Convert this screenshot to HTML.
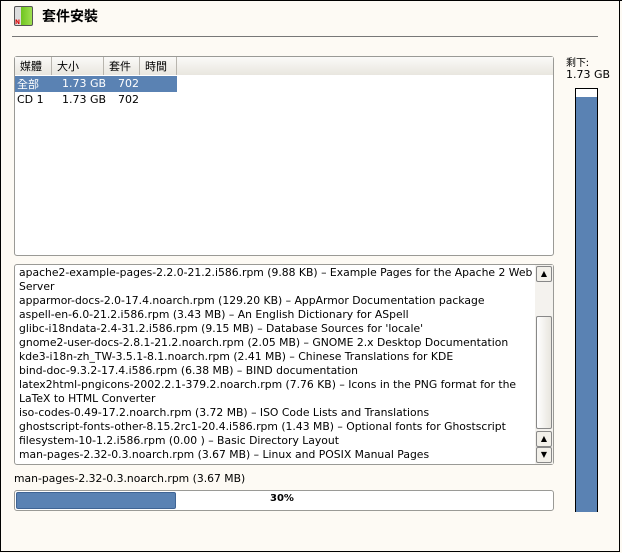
<!DOCTYPE html>
<html><head><meta charset="utf-8"><style>
*{margin:0;padding:0;box-sizing:border-box}
body{width:622px;height:553px;background:#fdfaf4;font-family:"DejaVu Sans","Liberation Sans","Noto Sans CJK TC",sans-serif;font-size:11px;color:#000;position:relative;overflow:hidden}
.a{position:absolute}
#frame{left:0;top:0;width:620px;height:552px;border:1px solid #000;border-top:none;border-right:1px solid #000}
.cjk{font-family:"Noto Sans CJK TC","WenQuanYi Zen Hei",sans-serif}
.box{border:1px solid #9a9a96;border-radius:3px;background:#fff}
.log div{height:14px;line-height:14px;white-space:nowrap;font-size:10.8px}
.hd{top:1px;height:18px;line-height:18px;border-right:1px solid #b8b5ae;padding-left:5px;background:linear-gradient(#fbfaf8,#e9e6df)}
</style></head><body>
<div class="a" id="frame"></div>
<div class="a" style="left:0;top:0;width:622px;height:1px;background:#000"></div>
<div class="a" style="left:14px;top:6px;width:19px;height:20px;background:linear-gradient(90deg,#ddd 0,#ddd 6px,#6fc420 6px,#9fe050);border:1px solid #555;border-radius:2px"></div>
<div class="a" style="left:15px;top:19px;font-size:6px;color:#d00;font-weight:bold">N</div>
<div class="a cjk" style="left:42px;top:6px;font-size:14px;font-weight:bold">套件安裝</div>
<div class="a" style="left:12px;top:36px;width:586px;height:1px;background:#777"></div>

<div class="a box" style="left:14px;top:56px;width:540px;height:200px"></div>
<div class="a hd cjk" style="left:15px;top:57px;width:37px">媒體</div>
<div class="a hd cjk" style="left:52px;top:57px;width:52px">大小</div>
<div class="a hd cjk" style="left:104px;top:57px;width:36px">套件</div>
<div class="a hd cjk" style="left:140px;top:57px;width:37px">時間</div>
<div class="a hd" style="left:177px;top:57px;width:376px;border-right:none"></div>
<div class="a" style="left:15px;top:76px;width:162px;height:16px;background:#5a82b3"></div>
<div class="a cjk" style="left:17px;top:77px;color:#fff;line-height:14px">全部</div>
<div class="a" style="left:62px;top:77px;color:#fff;line-height:14px">1.73 GB</div>
<div class="a" style="left:118px;top:77px;color:#fff;line-height:14px">702</div>
<div class="a" style="left:17px;top:93px;line-height:14px">CD 1</div>
<div class="a" style="left:62px;top:93px;line-height:14px">1.73 GB</div>
<div class="a" style="left:118px;top:93px;line-height:14px">702</div>

<div class="a cjk" style="left:566px;top:54px;font-size:10px">剩下:</div>
<div class="a" style="left:566px;top:68px">1.73 GB</div>
<div class="a" style="left:575px;top:88px;width:23px;height:424px;border:1px solid #000;border-bottom:none;background:#fff"></div>
<div class="a" style="left:576px;top:97px;width:21px;height:415px;background:#5a82b3"></div>

<div class="a box" style="left:14px;top:264px;width:540px;height:201px"></div>
<div class="a log" style="left:19px;top:266px">
<div>apache2-example-pages-2.2.0-21.2.i586.rpm (9.88 KB) – Example Pages for the Apache 2 Web</div>
<div>Server</div>
<div>apparmor-docs-2.0-17.4.noarch.rpm (129.20 KB) – AppArmor Documentation package</div>
<div>aspell-en-6.0-21.2.i586.rpm (3.43 MB) – An English Dictionary for ASpell</div>
<div>glibc-i18ndata-2.4-31.2.i586.rpm (9.15 MB) – Database Sources for 'locale'</div>
<div>gnome2-user-docs-2.8.1-21.2.noarch.rpm (2.05 MB) – GNOME 2.x Desktop Documentation</div>
<div>kde3-i18n-zh_TW-3.5.1-8.1.noarch.rpm (2.41 MB) – Chinese Translations for KDE</div>
<div>bind-doc-9.3.2-17.4.i586.rpm (6.38 MB) – BIND documentation</div>
<div>latex2html-pngicons-2002.2.1-379.2.noarch.rpm (7.76 KB) – Icons in the PNG format for the</div>
<div>LaTeX to HTML Converter</div>
<div>iso-codes-0.49-17.2.noarch.rpm (3.72 MB) – ISO Code Lists and Translations</div>
<div>ghostscript-fonts-other-8.15.2rc1-20.4.i586.rpm (1.43 MB) – Optional fonts for Ghostscript</div>
<div>filesystem-10-1.2.i586.rpm (0.00 ) – Basic Directory Layout</div>
<div>man-pages-2.32-0.3.noarch.rpm (3.67 MB) – Linux and POSIX Manual Pages</div>
</div>
<div class="a" style="left:535px;top:265px;width:18px;height:199px;background:#f4f2ee"></div>
<div class="a" style="left:536px;top:266px;width:16px;height:16px;border:1px solid #888;border-radius:2px;background:#f2f0ea;font-size:8px;text-align:center;line-height:14px">▲</div>
<div class="a" style="left:536px;top:316px;width:16px;height:113px;border:1px solid #888;border-radius:2px;background:linear-gradient(90deg,#fff,#e8e5de)"></div>
<div class="a" style="left:536px;top:431px;width:16px;height:16px;border:1px solid #888;border-radius:2px;background:#f2f0ea;font-size:8px;text-align:center;line-height:14px">▲</div>
<div class="a" style="left:536px;top:447px;width:16px;height:16px;border:1px solid #888;border-radius:2px;background:#f2f0ea;font-size:8px;text-align:center;line-height:14px">▼</div>

<div class="a" style="left:14px;top:472px;font-size:10.8px">man-pages-2.32-0.3.noarch.rpm (3.67 MB)</div>
<div class="a box" style="left:14px;top:490px;width:540px;height:21px"></div>
<div class="a" style="left:16px;top:492px;width:160px;height:17px;background:#5a82b3;border:1px solid #3f6494;border-radius:2px"></div>
<div class="a" style="left:270px;top:493px;font-weight:bold;font-size:10px">30%</div>
</body></html>
